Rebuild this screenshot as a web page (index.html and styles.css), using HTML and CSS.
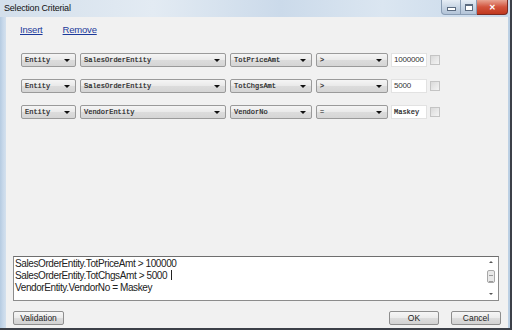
FILE: index.html
```html
<!DOCTYPE html>
<html lang="en">
<head>
  <meta charset="UTF-8" />
  <title>Selection Criterial</title>
  <link rel="stylesheet" href="styles.css">
</head>
<body>
  <div class="window">
    <div class="titlebar">
      <span class="title">Selection Criterial</span>
      <div class="caption-buttons">
        <div class="cap-btn"><span class="min-glyph"></span></div>
        <div class="cap-btn"><span class="max-glyph"></span></div>
        <div class="cap-btn close">&#x2715;</div>
      </div>
    </div>

    <div class="client">
      <div class="links">
        <a href="#" class="link">Insert</a>
        <a href="#" class="link">Remove</a>
      </div>

      <div class="rows">
        <div class="row">
          <div class="combo w1"><span>Entity</span><i class="arrow"></i></div>
          <div class="combo w2"><span>SalesOrderEntity</span><i class="arrow"></i></div>
          <div class="combo w3"><span>TotPriceAmt</span><i class="arrow"></i></div>
          <div class="combo w4"><span>&gt;</span><i class="arrow"></i></div>
          <div class="textbox">1000000</div>
          <div class="check"></div>
        </div>
        <div class="row">
          <div class="combo w1"><span>Entity</span><i class="arrow"></i></div>
          <div class="combo w2"><span>SalesOrderEntity</span><i class="arrow"></i></div>
          <div class="combo w3"><span>TotChgsAmt</span><i class="arrow"></i></div>
          <div class="combo w4"><span>&gt;</span><i class="arrow"></i></div>
          <div class="textbox">5000</div>
          <div class="check"></div>
        </div>
        <div class="row">
          <div class="combo w1"><span>Entity</span><i class="arrow"></i></div>
          <div class="combo w2"><span>VendorEntity</span><i class="arrow"></i></div>
          <div class="combo w3"><span>VendorNo</span><i class="arrow"></i></div>
          <div class="combo w4"><span>=</span><i class="arrow"></i></div>
          <div class="textbox mono">Maskey</div>
          <div class="check"></div>
        </div>
      </div>

      <div class="criteria">
        <div class="criteria-text">
          <div>SalesOrderEntity.TotPriceAmt &gt; 100000</div>
          <div>SalesOrderEntity.TotChgsAmt &gt; 5000 <span class="caret"></span></div>
          <div>VendorEntity.VendorNo = Maskey</div>
        </div>
        <div class="scrollbar">
          <span class="sb-up"></span>
          <span class="sb-thumb"></span>
          <span class="sb-down"></span>
        </div>
      </div>

      <div class="buttons">
        <button class="btn btn-wide">Validation</button>
        <div class="spacer"></div>
        <button class="btn">OK</button>
        <button class="btn">Cancel</button>
      </div>
    </div>
  </div>
</body>
</html>
```

FILE: styles.css
```css
body {
  margin: 0;
  background: #fff;
  font-family: "Liberation Sans", Arial, sans-serif;
  width: 516px;
  height: 332px;
  overflow: hidden;
}

.window {
  width: 510px;
  height: 328px;
  border-right: 2px solid #3c4048;
  border-bottom: 2px solid #3c4048;
  background: linear-gradient(90deg, #b5cbe1 0px, #c7d8ea 3px, #d4e1ee 6px, #d4e1ee 500px, #b8cde2 510px);
  display: flex;
  flex-direction: column;
}

.titlebar {
  height: 17px;
  display: flex;
  align-items: flex-start;
  background: linear-gradient(90deg, #d3dfeb, #e3ebf3 30%, #cbdaea 55%, #dbe6f1 75%, #c6d7e9);
}

.title {
  font-size: 9px;
  color: #111;
  padding: 3px 0 0 4px;
  letter-spacing: -0.2px;
}

.caption-buttons {
  margin-left: auto;
  margin-right: 2px;
  display: flex;
  height: 15px;
}

.cap-btn {
  width: 20px;
  height: 15px;
  border: 1px solid #8a9db4;
  border-top: none;
  background: linear-gradient(#e6edf5, #c9d6e5 50%, #b3c4d8);
  display: flex;
  align-items: center;
  justify-content: center;
  box-sizing: border-box;
}

.cap-btn:first-child {
  border-radius: 0 0 0 4px;
}

.cap-btn + .cap-btn {
  border-left: none;
  width: 16px;
}

.cap-btn.close {
  width: 31px;
  border-color: #7a2a22;
  border-radius: 0 0 4px 0;
  background: linear-gradient(#e8a493, #d2533c 50%, #c0381f);
  color: #fff;
  font-size: 8px;
  font-weight: bold;
}

.min-glyph {
  width: 7px;
  height: 2px;
  background: #fff;
  border: 1px solid #5b6b80;
  margin-top: 4px;
}

.max-glyph {
  width: 6px;
  height: 4px;
  border: 1px solid #5b6b80;
  border-top-width: 2px;
  background: #fff;
}

.client {
  flex: 1;
  margin: 0 2px 0 6px;
  background: #f1f1f1;
  display: flex;
  flex-direction: column;
  padding: 0 7px 3px 7px;
  box-sizing: border-box;
}

.links {
  display: flex;
  gap: 20px;
  padding: 7px 0 0 7px;
  height: 12px;
}

.link {
  font-size: 9.5px;
  color: #1c3a9b;
  letter-spacing: -0.2px;
}

.rows {
  display: flex;
  flex-direction: column;
  gap: 12px;
  margin-top: 17px;
  padding-left: 8px;
}

.row {
  display: flex;
  align-items: center;
  height: 14px;
}

.combo {
  height: 14px;
  box-sizing: border-box;
  border: 1px solid #9a9a9a;
  border-radius: 2px;
  background: linear-gradient(#f5f5f5, #e9e9e9 50%, #dcdcdc 51%, #d5d5d5);
  display: flex;
  align-items: center;
  padding: 0 5px 0 3px;
  margin-right: 4px;
  font-family: "Liberation Mono", "Courier New", monospace;
  font-size: 7px;
  color: #111;
  -webkit-text-stroke: 0.2px #333;
}

.combo span {
  flex: 1;
}

.arrow {
  width: 0;
  height: 0;
  border-left: 3px solid transparent;
  border-right: 3px solid transparent;
  border-top: 3px solid #111;
}

.w1 { width: 55px; }
.w2 { width: 146px; }
.w3 { width: 82px; }
.w4 { width: 72px; margin-right: 3px; }

.textbox {
  width: 36px;
  height: 14px;
  box-sizing: border-box;
  background: #fff;
  border: 1px solid #e2e2e2;
  font-size: 8px;
  color: #333;
  padding: 1px 0 0 2px;
  margin-right: 3px;
  letter-spacing: -0.2px;
}

.textbox.mono {
  font-family: "Liberation Mono", "Courier New", monospace;
  font-size: 7px;
  color: #111;
  -webkit-text-stroke: 0.2px #333;
  padding-top: 2px;
  letter-spacing: 0;
}

.check {
  width: 10px;
  height: 10px;
  box-sizing: border-box;
  border: 1px solid #c4c4c4;
  background: linear-gradient(135deg, #dadada, #f4f4f4);
}

.criteria {
  margin-top: auto;
  height: 45px;
  box-sizing: border-box;
  border: 1px solid #8c8c8c;
  border-top-color: #6e6e6e;
  background: #fff;
  display: flex;
  margin-right: 2px;
}

.criteria-text {
  flex: 1;
  font-size: 10px;
  line-height: 12px;
  color: #222;
  padding: 1px 0 0 1px;
  letter-spacing: -0.4px;
}

.caret {
  display: inline-block;
  width: 1px;
  height: 10px;
  background: #222;
  vertical-align: -1px;
  margin-left: 1px;
}

.scrollbar {
  width: 10px;
  margin: 0 2px 0 0;
  display: flex;
  flex-direction: column;
  align-items: center;
  padding-top: 4px;
}

.sb-up, .sb-down {
  width: 0;
  height: 0;
  border-left: 2px solid transparent;
  border-right: 2px solid transparent;
}

.sb-up {
  border-bottom: 2px solid #555;
}

.sb-down {
  border-top: 2px solid #555;
  margin-top: 10px;
}

.sb-thumb {
  margin-top: 7px;
  width: 8px;
  height: 13px;
  box-sizing: border-box;
  border: 1px solid #a8a8a8;
  border-radius: 2px;
  background: repeating-linear-gradient(#e8e8e8 0 4px, #9a9a9a 4px 5px, #e8e8e8 5px 6px);
  background-size: 4px 100%;
  background-repeat: no-repeat;
  background-position: center;
  background-color: #eaeaea;
}

.buttons {
  display: flex;
  margin-top: 10px;
  gap: 12px;
}

.spacer {
  flex: 1;
}

.btn {
  width: 50px;
  height: 14px;
  padding: 0;
  border: 1px solid #8e8e8e;
  border-radius: 2px;
  background: linear-gradient(#f6f6f6, #ebebeb 50%, #dddddd 51%, #d2d2d2);
  font-family: "Liberation Sans", Arial, sans-serif;
  font-size: 8.5px;
  color: #222;
}

.btn-wide {
  width: 51px;
}
```
